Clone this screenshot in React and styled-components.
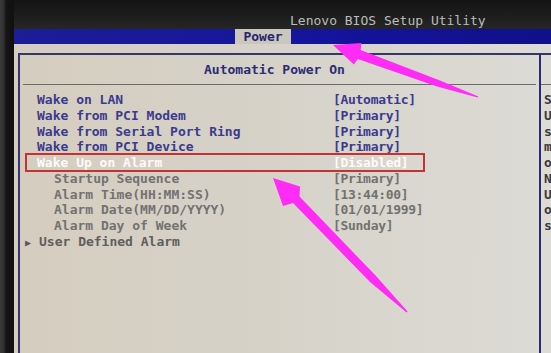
import React from 'react';
import styled, {createGlobalStyle} from 'styled-components';

const GlobalStyle = createGlobalStyle`
    html, body {
        margin: 0;
        padding: 0;
        background: #161616;
        overflow: hidden;
    }
`;

const Screen = styled.div`
    position: relative;
    width: 551px;
    height: 353px;
    display: grid;
    grid-template-columns: 14px 1fr;
    overflow: hidden;
    font-family: "DejaVu Sans Mono", "Liberation Mono", monospace;
    font-size: 13px;
`;

const Bezel = styled.div`
    background: linear-gradient(90deg, #3c3c3c 0px, #2e2e2e 4px, #141414 6px, #101010 14px);
`;

const Main = styled.div`
    display: flex;
    flex-direction: column;
    min-width: 0;
`;

const TopBar = styled.div`
    height: 29px;
    box-sizing: border-box;
    padding: 12px 0 0 276px;
    display: flex;
    align-items: center;
    background: linear-gradient(180deg, #141414 0%, #1e1e1e 60%, #262626 100%);
    color: #bdbdbd;
    white-space: nowrap;
`;

const MenuBar = styled.div`
    height: 15px;
    padding-left: 221px;
    display: flex;
    background: linear-gradient(90deg, #1d1d96 0%, #14149c 60%, #10108a 100%);
`;

const Tab = styled.div`
    width: 56px;
    display: flex;
    align-items: center;
    justify-content: center;
    background: #cac8be;
    color: #26266e;
    font-weight: bold;
    line-height: 15px;
`;

const Body = styled.div`
    flex: 1;
    padding: 9px 0 0 4px;
    background: linear-gradient(90deg, #d5cdbf 0%, #d6d2c8 45%, #dcdbd5 100%);
    overflow: hidden;
`;

const Frame = styled.div`
    height: 100%;
    display: grid;
    grid-template-columns: 523px 1fr;
`;

const Panel = styled.div`
    border-top: 2px solid #36366c;
    border-left: ${p => (p.$help ? 'none' : '2px solid #36366c')};
    border-right: ${p => (p.$help ? 'none' : '2px solid #2a2a78')};
    min-width: 0;
    overflow: hidden;
`;

const PanelHead = styled.div`
    height: 29px;
    display: flex;
    align-items: center;
    justify-content: center;
    padding-right: 10px;
    color: #2c2c72;
    font-weight: bold;
`;

const Rule = styled.div`
    height: 1px;
    margin: 0 ${p => (p.$help ? '0 0 0' : '3px')};
    background: #6c6c6c;
`;

const List = styled.div`
    padding-top: 7px;
`;

const Row = styled.div`
    position: relative;
    display: grid;
    grid-template-columns: 12px 296px 1fr;
    padding-left: 5px;
    line-height: 15.75px;
    font-weight: bold;
    white-space: nowrap;

    ${p => p.$selected && `
        &::after {
            content: "";
            position: absolute;
            left: 5px;
            top: -2px;
            width: 400px;
            bottom: -1.5px;
            border: 2px solid #c53232;
            box-sizing: border-box;
        }
    `}
`;

const Marker = styled.span`
    color: #5a5a5a;
    font-size: 10px;
    padding-top: 1px;
`;

const Label = styled.span`
    padding-left: ${p => (p.$sub ? '17px' : p.$menu ? '2px' : '0')};
    color: ${p => p.$color};
`;

const Value = styled.span`
    color: ${p => p.$color};
    letter-spacing: -0.3px;
`;

const HelpLine = styled.div`
    padding-left: 3px;
    line-height: 15.75px;
    color: #3a3a3a;
    font-weight: bold;
    white-space: nowrap;
`;

const Overlay = styled.svg`
    position: absolute;
    left: 0;
    top: 0;
    pointer-events: none;
`;

const BLUE = '#3b3b8e';
const GREY = '#727272';
const WHITE = '#fbfbf8';

const items = [
    {label: 'Wake on LAN', value: '[Automatic]', color: BLUE},
    {label: 'Wake from PCI Modem', value: '[Primary]', color: BLUE},
    {label: 'Wake from Serial Port Ring', value: '[Primary]', color: BLUE},
    {label: 'Wake from PCI Device', value: '[Primary]', color: BLUE},
    {label: 'Wake Up on Alarm', value: '[Disabled]', color: WHITE, selected: true},
    {label: 'Startup Sequence', value: '[Primary]', color: GREY, sub: true},
    {label: 'Alarm Time(HH:MM:SS)', value: '[13:44:00]', color: GREY, sub: true},
    {label: 'Alarm Date(MM/DD/YYYY)', value: '[01/01/1999]', color: GREY, sub: true},
    {label: 'Alarm Day of Week', value: '[Sunday]', color: GREY, sub: true},
    {label: 'User Defined Alarm', color: '#5e5e5e', menu: true},
];

// 오른쪽 도움말 - 화면 끝에서 잘려서 첫 글자만 보임
const help = ['S', 'U', 's', 'm', 'o', 'N', 'U', 'o', 's'];

const Arrows = () => (
    <Overlay width="551" height="353" viewBox="0 0 551 353">
        {/* 위쪽 화살표 - Power 탭 */}
        <polygon
            fill="#ff2cf6"
            points="333,45 361.5,43 360.6,50 440,80.5 478.3,96.6 477.7,97.6 437,86.5 357.8,59 353.8,64.5"
        />
        {/* 아래쪽 화살표 - 선택된 항목 */}
        <polygon
            fill="#ff2cf6"
            points="273,178 300,186.5 299.5,196.5 376,276 407.6,311.6 406.6,312.4 370,282 293,203 283,206"
        />
    </Overlay>
);

const App = () => (
    <>
        <GlobalStyle/>
        <Screen>
            <Bezel/>
            <Main>
                <TopBar>Lenovo BIOS Setup Utility</TopBar>
                <MenuBar>
                    <Tab>Power</Tab>
                </MenuBar>
                <Body>
                    <Frame>
                        <Panel>
                            <PanelHead>Automatic Power On</PanelHead>
                            <Rule/>
                            <List>
                                {items.map(it => (
                                    <Row key={it.label} $selected={it.selected}>
                                        <Marker>{it.menu ? '▶' : ''}</Marker>
                                        <Label $sub={it.sub} $menu={it.menu} $color={it.color}>{it.label}</Label>
                                        {it.value && <Value $color={it.color}>{it.value}</Value>}
                                    </Row>
                                ))}
                            </List>
                        </Panel>
                        <Panel $help>
                            <PanelHead/>
                            <Rule $help/>
                            <List>
                                {help.map((h, i) => (
                                    <HelpLine key={i}>{h}</HelpLine>
                                ))}
                            </List>
                        </Panel>
                    </Frame>
                </Body>
            </Main>
            <Arrows/>
        </Screen>
    </>
);

export default App;
